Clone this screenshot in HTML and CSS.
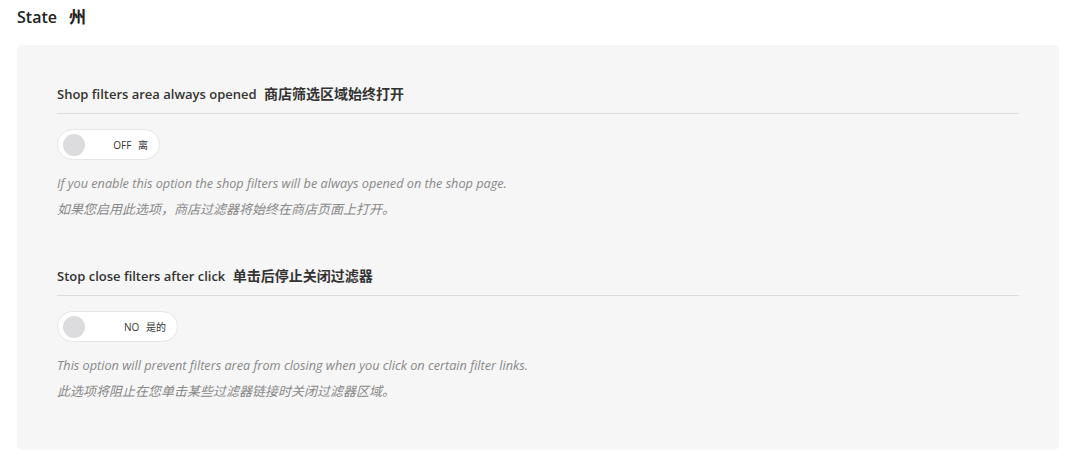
FILE: index.html
```html
<!DOCTYPE html>
<html lang="en">
<head>
<meta charset="utf-8">
<title>State</title>
<link rel="stylesheet" href="styles.css">
</head>
<body>
<div class="page">
  <h2 class="page-title">State <span class="zh">州</span></h2>
  <div class="panel">
    <section class="option">
      <h3 class="option-title">Shop filters area always opened <span class="zh">商店筛选区域始终打开</span></h3>
      <div class="toggle toggle-off">
        <span class="knob"></span>
        <span class="toggle-label">OFF <span class="zh">离</span></span>
      </div>
      <p class="desc">If you enable this option the shop filters will be always opened on the shop page.</p>
      <p class="desc desc-zh">如果您启用此选项，商店过滤器将始终在商店页面上打开。</p>
    </section>
    <section class="option">
      <h3 class="option-title">Stop close filters after click <span class="zh">单击后停止关闭过滤器</span></h3>
      <div class="toggle toggle-no">
        <span class="knob"></span>
        <span class="toggle-label">NO <span class="zh">是的</span></span>
      </div>
      <p class="desc">This option will prevent filters area from closing when you click on certain filter links.</p>
      <p class="desc desc-zh">此选项将阻止在您单击某些过滤器链接时关闭过滤器区域。</p>
    </section>
  </div>
</div>
</body>
</html>
```
FILE: styles.css
```css
html, body {
  margin: 0;
  padding: 0;
  background: #ffffff;
}
body {
  font-family: "Open Sans", "Noto Sans CJK SC", sans-serif;
  color: #333;
}
.page {
  padding: 6px 19px 0 17px;
}
.page-title {
  margin: 0;
  font-size: 16px;
  font-weight: 600;
  line-height: 22px;
  color: #222;
}
.page-title .zh {
  font-size: 17px;
  margin-left: 8px;
}
.panel {
  margin-top: 17px;
  background: #f6f6f6;
  border-radius: 5px;
  padding: 39px 40px 46px;
}
.option + .option {
  margin-top: 44px;
}
.option-title {
  margin: 0;
  font-size: 13px;
  font-weight: 600;
  line-height: 20px;
  color: #333;
  padding-bottom: 9px;
  border-bottom: 1px solid #dddddd;
}
.option-title .zh {
  font-size: 14px;
  margin-left: 4px;
}
.toggle {
  margin-top: 15px;
  height: 31px;
  box-sizing: border-box;
  background: #fff;
  border: 1px solid #e6e6e6;
  border-radius: 16px;
  display: flex;
  align-items: center;
  justify-content: space-between;
  padding: 0 11px 0 5px;
}
.toggle-off { width: 103px; }
.toggle-no { width: 121px; }
.knob {
  width: 22px;
  height: 22px;
  border-radius: 50%;
  background: #dcdcdf;
}
.toggle-label {
  font-size: 10px;
  color: #333;
  line-height: 1;
}
.toggle-label .zh {
  margin-left: 4px;
}
.desc {
  margin: 0;
  font-size: 12.7px;
  font-style: italic;
  line-height: 26px;
  color: #888;
}
.desc-zh {
  font-size: 13px;
}
.toggle + .desc {
  margin-top: 10px;
}
```
